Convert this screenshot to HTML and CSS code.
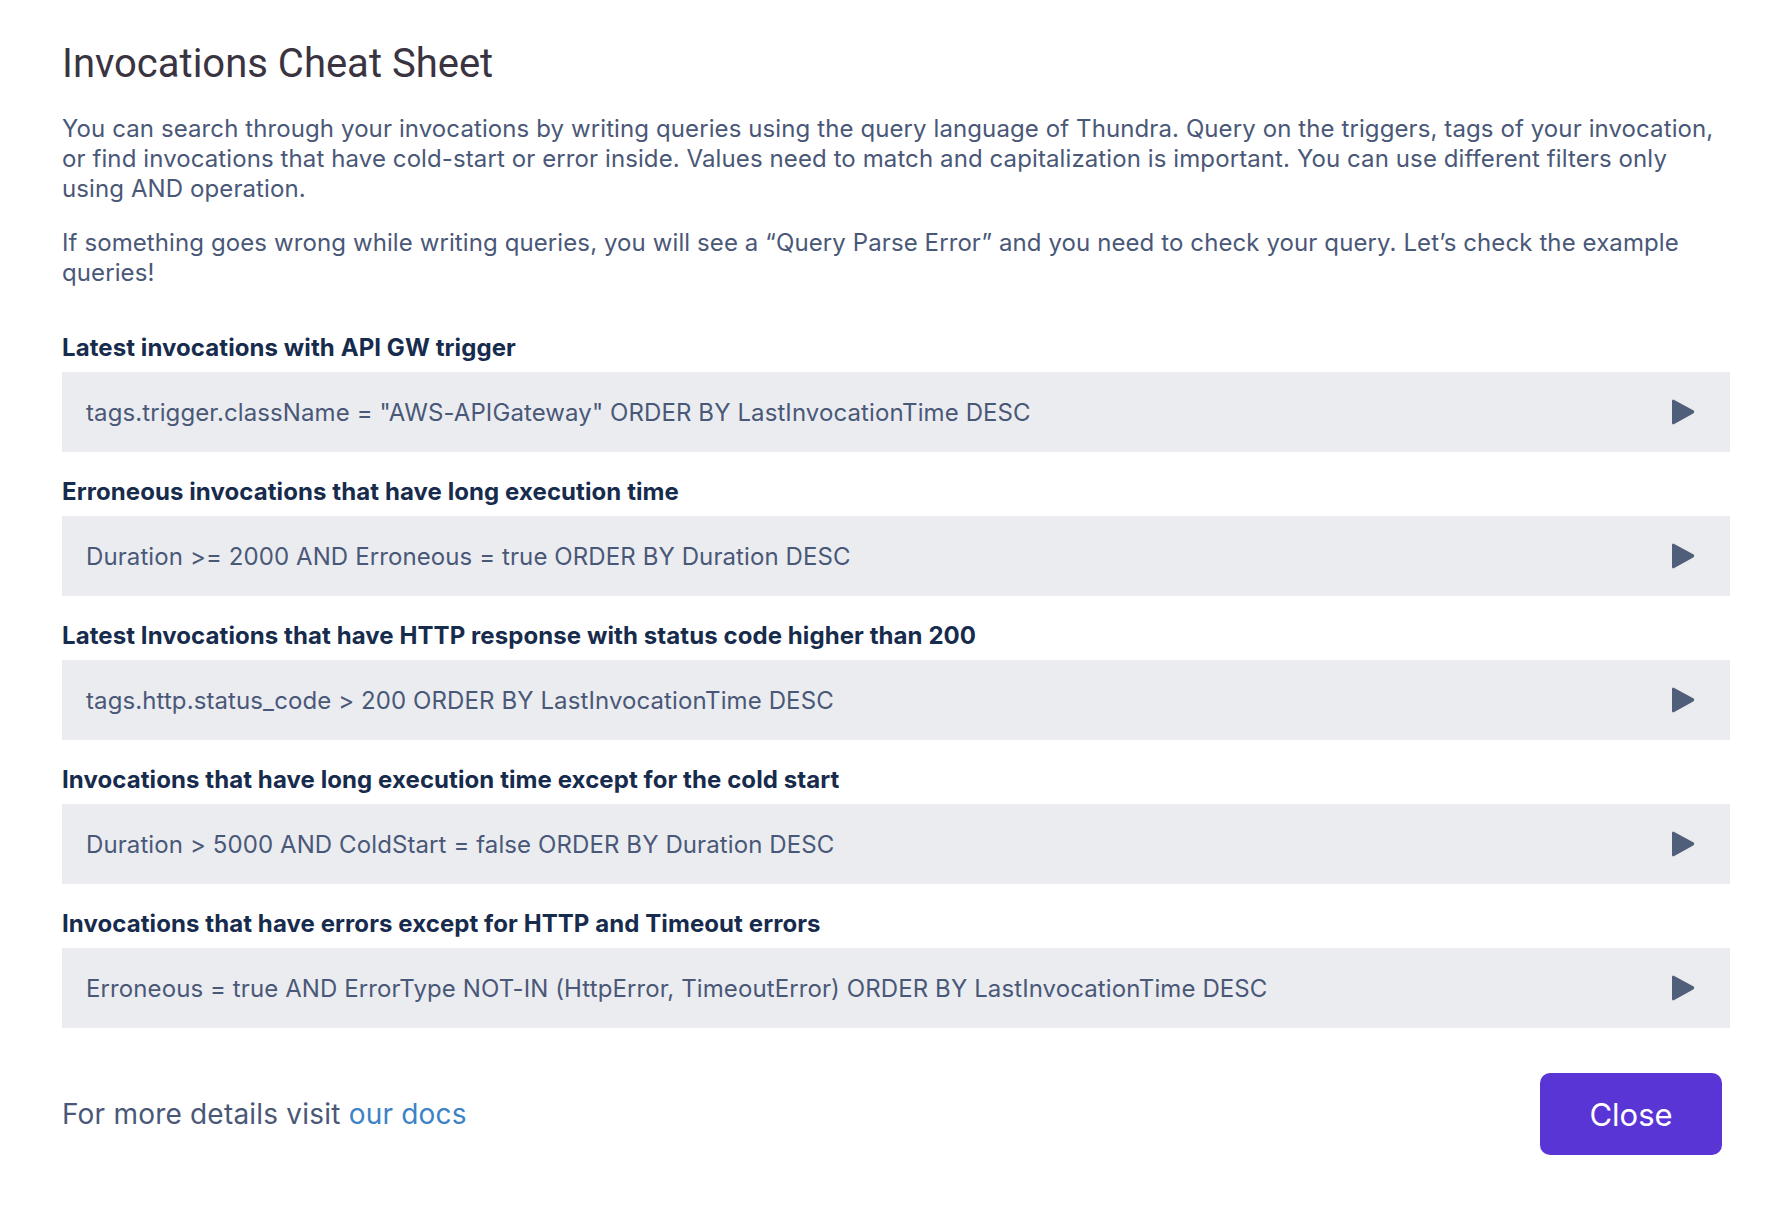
FILE: index.html
```html
<!DOCTYPE html>
<html lang="en">
<head>
<meta charset="utf-8">
<title>Invocations Cheat Sheet</title>
<link rel="stylesheet" href="styles.css">
</head>
<body>
<div class="sheet">
  <h1 class="title">Invocations Cheat Sheet</h1>
  <p class="intro">You can search through your invocations by writing queries using the query language of Thundra. Query on the triggers, tags of your invocation, or find invocations that have cold-start or error inside. Values need to match and capitalization is important. You can use different filters only using AND operation.</p>
  <p class="intro">If something goes wrong while writing queries, you will see a “Query Parse Error” and you need to check your query. Let’s check the example queries!</p>

  <div class="examples">
    <div class="example">
      <h2 class="example-title">Latest invocations with API GW trigger</h2>
      <div class="query">
        <span class="query-text">tags.trigger.className = "AWS-APIGateway" ORDER BY LastInvocationTime DESC</span>
        <svg class="play" width="26" height="30" viewBox="0 0 26 30"><path d="M2 4.2 Q2 1.6 4.3 2.9 L23.2 13.3 Q25.3 14.9 23.2 16.5 L4.3 27.1 Q2 28.4 2 25.8 Z" fill="#505f79"/></svg>
      </div>
    </div>
    <div class="example">
      <h2 class="example-title">Erroneous invocations that have long execution time</h2>
      <div class="query">
        <span class="query-text">Duration &gt;= 2000 AND Erroneous = true ORDER BY Duration DESC</span>
        <svg class="play" width="26" height="30" viewBox="0 0 26 30"><path d="M2 4.2 Q2 1.6 4.3 2.9 L23.2 13.3 Q25.3 14.9 23.2 16.5 L4.3 27.1 Q2 28.4 2 25.8 Z" fill="#505f79"/></svg>
      </div>
    </div>
    <div class="example">
      <h2 class="example-title">Latest Invocations that have HTTP response with status code higher than 200</h2>
      <div class="query">
        <span class="query-text">tags.http.status_code &gt; 200 ORDER BY LastInvocationTime DESC</span>
        <svg class="play" width="26" height="30" viewBox="0 0 26 30"><path d="M2 4.2 Q2 1.6 4.3 2.9 L23.2 13.3 Q25.3 14.9 23.2 16.5 L4.3 27.1 Q2 28.4 2 25.8 Z" fill="#505f79"/></svg>
      </div>
    </div>
    <div class="example">
      <h2 class="example-title">Invocations that have long execution time except for the cold start</h2>
      <div class="query">
        <span class="query-text">Duration &gt; 5000 AND ColdStart = false ORDER BY Duration DESC</span>
        <svg class="play" width="26" height="30" viewBox="0 0 26 30"><path d="M2 4.2 Q2 1.6 4.3 2.9 L23.2 13.3 Q25.3 14.9 23.2 16.5 L4.3 27.1 Q2 28.4 2 25.8 Z" fill="#505f79"/></svg>
      </div>
    </div>
    <div class="example">
      <h2 class="example-title">Invocations that have errors except for HTTP and Timeout errors</h2>
      <div class="query">
        <span class="query-text">Erroneous = true AND ErrorType NOT-IN (HttpError, TimeoutError) ORDER BY LastInvocationTime DESC</span>
        <svg class="play" width="26" height="30" viewBox="0 0 26 30"><path d="M2 4.2 Q2 1.6 4.3 2.9 L23.2 13.3 Q25.3 14.9 23.2 16.5 L4.3 27.1 Q2 28.4 2 25.8 Z" fill="#505f79"/></svg>
      </div>
    </div>
  </div>

  <div class="footer">
    <span class="more">For more details visit <a class="docs" href="#">our docs</a></span>
    <button class="close" type="button">Close</button>
  </div>
</div>
</body>
</html>
```
FILE: styles.css
```css
html, body {
  margin: 0;
  padding: 0;
  background: #ffffff;
}
body {
  font-family: Inter, "Noto Sans", sans-serif;
  color: #42526e;
}
.sheet {
  padding: 40px 60px 0 62px;
}
.title {
  margin: 0;
  font-family: Roboto, "Noto Sans", sans-serif;
  font-weight: 400;
  font-size: 40px;
  line-height: 48px;
  color: #3a3441;
}
.intro {
  margin: 26px 0 0 0;
  font-size: 24px;
  line-height: 30px;
  letter-spacing: 0.1px;
  color: #4a5878;
}
.intro + .intro {
  margin-top: 24px;
}
.examples {
  margin-top: 45px;
  display: flex;
  flex-direction: column;
  gap: 25px;
}
.example-title {
  margin: 0 0 9px 0;
  font-size: 24px;
  line-height: 30px;
  font-weight: 700;
  letter-spacing: 0.08px;
  color: #172b4d;
}
.query {
  height: 80px;
  box-sizing: border-box;
  background: #ebecf0;
  display: flex;
  align-items: center;
  justify-content: space-between;
  padding: 0 34px 0 24px;
}
.query-text {
  font-size: 24px;
  letter-spacing: 0.1px;
  color: #4a5878;
}
.play {
  display: block;
}
.footer {
  margin-top: 45px;
  display: flex;
  align-items: center;
  justify-content: space-between;
  padding-right: 8px;
}
.more {
  font-size: 28px;
  letter-spacing: 0.2px;
  color: #4a5878;
}
.docs {
  color: #3d82c4;
  text-decoration: none;
}
.close {
  width: 182px;
  height: 82px;
  border: none;
  border-radius: 10px;
  background: #5a35d6;
  color: #ffffff;
  font-family: Inter, "Noto Sans", sans-serif;
  font-size: 31px;
  cursor: pointer;
}
```
